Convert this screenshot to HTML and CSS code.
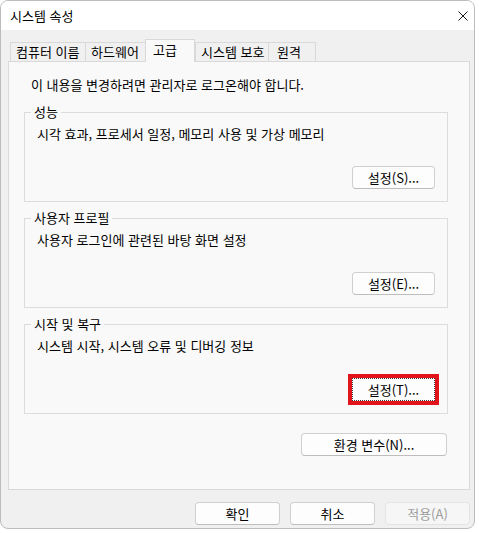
FILE: index.html
```html
<!DOCTYPE html>
<html lang="ko">
<head>
<meta charset="utf-8">
<title>시스템 속성</title>
<link rel="stylesheet" href="styles.css">
</head>
<body>
<div class="window">
  <div class="titlebar">
    <span class="title">시스템 속성</span>
    <span class="close">
      <svg width="10" height="10" viewBox="0 0 10 10"><path d="M0.5 0.5L9.5 9.5M9.5 0.5L0.5 9.5" stroke="#1b1b1b" stroke-width="1" fill="none"/></svg>
    </span>
  </div>
  <div class="client">
    <div class="tabs">
      <div class="tab tab-name">컴퓨터 이름</div>
      <div class="tab tab-hw">하드웨어</div>
      <div class="tab tab-adv selected">고급</div>
      <div class="tab tab-prot">시스템 보호</div>
      <div class="tab tab-remote last">원격</div>
    </div>
    <div class="panel">
      <p class="notice">이 내용을 변경하려면 관리자로 로그온해야 합니다.</p>
      <fieldset class="group">
        <legend>성능</legend>
        <p class="desc">시각 효과, 프로세서 일정, 메모리 사용 및 가상 메모리</p>
        <div class="actions"><button class="btn">설정(S)...</button></div>
      </fieldset>
      <fieldset class="group">
        <legend>사용자 프로필</legend>
        <p class="desc">사용자 로그인에 관련된 바탕 화면 설정</p>
        <div class="actions"><button class="btn">설정(E)...</button></div>
      </fieldset>
      <fieldset class="group">
        <legend>시작 및 복구</legend>
        <p class="desc">시스템 시작, 시스템 오류 및 디버깅 정보</p>
        <div class="actions"><button class="btn btn-focus">설정(T)...</button></div>
      </fieldset>
      <div class="env-row"><button class="btn btn-wide">환경 변수(N)...</button></div>
    </div>
    <div class="footer">
      <button class="btn btn-footer">확인</button>
      <button class="btn btn-footer">취소</button>
      <button class="btn btn-footer btn-disabled">적용(A)</button>
    </div>
  </div>
</div>
</body>
</html>
```

FILE: styles.css
```css
html, body {
  margin: 0;
  padding: 0;
  background: #ffffff;
}

body {
  font-family: "Noto Sans CJK KR", "Noto Sans", sans-serif;
  font-size: 13px;
  color: #000000;
}

.window {
  box-sizing: border-box;
  width: 475px;
  height: 529px;
  border: 1px solid #bcbcbc;
  border-radius: 8px;
  overflow: hidden;
  background: #f0f0f0;
  display: flex;
  flex-direction: column;
}

.titlebar {
  height: 29px;
  flex: none;
  background: #ffffff;
  display: flex;
  align-items: center;
  justify-content: space-between;
  padding: 0 6px 0 9px;
}

.title {
  line-height: 16px;
}

.close {
  width: 10px;
  height: 10px;
  display: flex;
}

.client {
  flex: 1;
  display: flex;
  flex-direction: column;
  padding: 9px 4px 0 7px;
}

.tabs {
  display: flex;
  align-items: flex-end;
  height: 23px;
  margin: 0 0 -1px 2px;
}

.tab {
  box-sizing: border-box;
  height: 19px;
  margin-bottom: 1px;
  border-top: 1px solid #d9d9d9;
  border-left: 1px solid #d9d9d9;
  background: #f0f0f0;
  line-height: 18px;
  padding-left: 5px;
  white-space: nowrap;
}

.tab-name { width: 75px; }
.tab-hw { width: 60px; }
.tab-adv { width: 50px; padding-left: 7px; }
.tab-prot { width: 73px; }
.tab-remote { width: 48px; padding-left: 8px; }

.tab.last {
  border-right: 1px solid #d9d9d9;
}

.tab.selected {
  position: relative;
  z-index: 1;
  height: 23px;
  margin-bottom: 0;
  border-right: 1px solid #d9d9d9;
  background: #f9f9f9;
  padding-top: 1px;
}

.panel {
  box-sizing: border-box;
  width: 462px;
  height: 429px;
  border: 1px solid #d9d9d9;
  background: #f9f9f9;
  padding: 15px 21px 0 15px;
  display: flex;
  flex-direction: column;
  gap: 8px;
}

.notice {
  margin: 0 0 3px 7px;
  line-height: 16px;
}

.group {
  margin: 0;
  padding: 6px 12px 12px 12px;
  border: 1px solid #dcdcdc;
  min-width: 0;
}

.group legend {
  padding: 0 3px;
  margin-left: -6px;
  line-height: 16px;
}

.desc {
  margin: 0;
  line-height: 16px;
}

.actions {
  display: flex;
  justify-content: flex-end;
  margin-top: 24px;
}

.btn {
  box-sizing: border-box;
  height: 23px;
  width: 83px;
  padding: 0;
  font-family: inherit;
  font-size: 13px;
  line-height: 21px;
  color: #000000;
  background: #fdfdfd;
  border: 1px solid #d0d0d0;
  border-bottom-color: #bdbdbd;
  border-radius: 4px;
  text-align: center;
}

.btn-focus {
  border: 1px dotted #3a3a3a;
  border-radius: 0;
  outline: 4px solid #e1141c;
  outline-offset: 0;
}

.env-row {
  display: flex;
  justify-content: flex-end;
  margin: 11px 1px 0 0;
}

.btn-wide {
  width: 146px;
}

.footer {
  display: flex;
  justify-content: flex-end;
  gap: 10px;
  margin-top: 12px;
}

.btn-footer {
  width: 85px;
}

.btn-disabled {
  color: #9d9d9d;
  background: #f6f6f6;
  border-color: #e4e4e4;
}
```
